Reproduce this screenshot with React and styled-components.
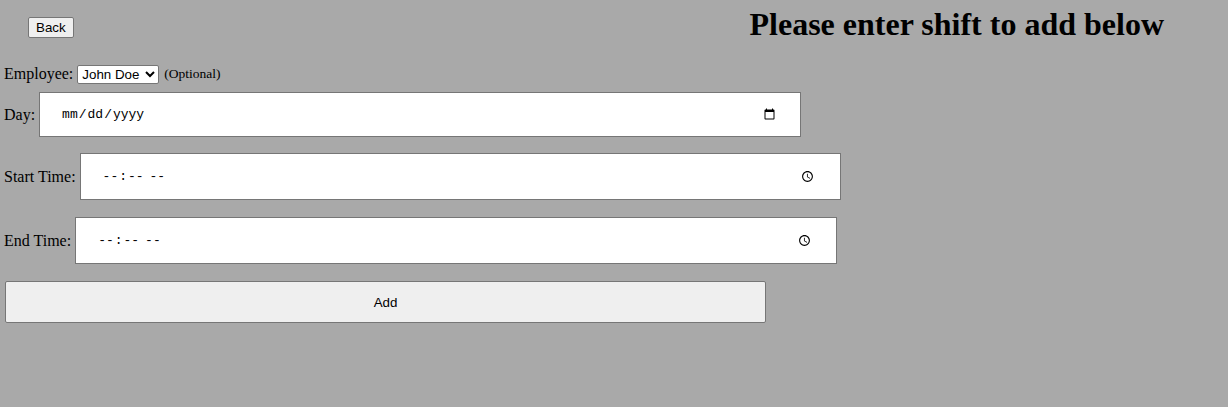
import React from "react";
import styled, { createGlobalStyle } from "styled-components";

const GlobalStyle = createGlobalStyle`
  html, body {
    margin: 0;
    padding: 0;
    background: #a9a9a9;
  }
  body {
    font-family: "Liberation Serif", "Times New Roman", serif;
    font-size: 16px;
    color: #000;
  }
`;

const Page = styled.div`
  min-height: 407px;
  padding: 0 4px;
  background: #a9a9a9;
  display: flex;
  flex-direction: column;
  align-items: flex-start;
`;

const Header = styled.header`
  width: 100%;
  box-sizing: border-box;
  height: 64px;
  display: flex;
  align-items: flex-start;
  justify-content: space-between;
  padding: 0 60px 0 24px;
`;

const NativeButton = styled.button`
  font-family: "Liberation Sans", Arial, sans-serif;
  font-size: 13.33px;
  color: #000;
  background: #efefef;
  border: 1px solid #767676;
  border-radius: 2px;
  cursor: pointer;
`;

const BackButton = styled(NativeButton)`
  margin-top: 17px;
  height: 21px;
  padding: 1px 7px;
`;

const Title = styled.h1`
  margin: 6px 0 0;
  font-size: 32px;
  line-height: 37px;
  font-weight: bold;
`;

const EmployeeRow = styled.div`
  display: flex;
  align-items: center;
  gap: 4px;
  height: 20px;
`;

const Select = styled.select`
  font-family: "Liberation Sans", Arial, sans-serif;
  font-size: 13.33px;
  width: 82px;
  height: 19px;
  background: #fff;
  color: #000;
  border: 1px solid #767676;
  border-radius: 2px;
`;

const Hint = styled.span`
  font-size: 13.5px;
  margin-left: 1px;
`;

const FieldRow = styled.label`
  display: flex;
  align-items: center;
  gap: 4px;
  margin-top: ${(p) => p.$top}px;
`;

const Input = styled.input`
  box-sizing: border-box;
  width: ${(p) => p.$w}px;
  height: ${(p) => p.$h}px;
  padding: 0 22px 0 21px;
  font-family: "Liberation Mono", "Courier New", monospace;
  font-size: 13px;
  color: #000;
  background: #fff;
  border: 1px solid #767676;
  border-radius: 0;
`;

const AddButton = styled(NativeButton)`
  margin-top: 17px;
  margin-left: 1px;
  width: 761px;
  height: 42px;
`;

export default function App() {
  return (
    <>
      <GlobalStyle />
      <Page>
        <Header>
          <BackButton type="button">Back</BackButton>
          <Title>Please enter shift to add below</Title>
        </Header>
        <EmployeeRow>
          <span>Employee:</span>
          <Select defaultValue="john">
            <option value="john">John Doe</option>
          </Select>
          <Hint>(Optional)</Hint>
        </EmployeeRow>
        <FieldRow $top={8}>
          <span>Day:</span>
          <Input type="date" $w={762} $h={45} />
        </FieldRow>
        <FieldRow $top={16}>
          <span>Start Time:</span>
          <Input type="time" $w={761} $h={47} />
        </FieldRow>
        <FieldRow $top={17}>
          <span>End Time:</span>
          <Input type="time" $w={762} $h={47} />
        </FieldRow>
        <AddButton type="button">Add</AddButton>
      </Page>
    </>
  );
}
